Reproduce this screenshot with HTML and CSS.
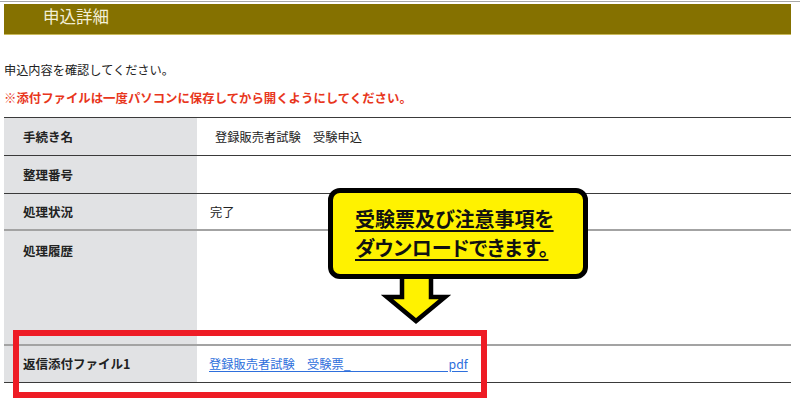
FILE: index.html
```html
<!DOCTYPE html>
<html lang="ja">
<head>
<meta charset="utf-8">
<title>申込詳細</title>
<link rel="stylesheet" href="styles.css">
</head>
<body>
<div class="topline"></div>
<div class="page">
  <h1 class="header">申込詳細</h1>
  <p class="intro">申込内容を確認してください。</p>
  <p class="warn">※添付ファイルは一度パソコンに保存してから開くようにしてください。</p>
  <div class="table">
    <div class="row r1"><div class="label">手続き名</div><div class="value lead">登録販売者試験　受験申込</div></div>
    <div class="row r2"><div class="label">整理番号</div><div class="value"></div></div>
    <div class="row r3 light"><div class="label">処理状況</div><div class="value">完了</div></div>
    <div class="row r4 light tall"><div class="label">処理履歴</div><div class="value"></div></div>
    <div class="row r5"><div class="label">返信添付ファイル1</div><div class="value"><a class="file" href="#">登録販売者試験　受験票_　　　　　　　　pdf</a></div></div>
  </div>
</div>
<div class="callout">
  <p class="callout-text"><span class="cl">受験票及び注意事項を</span><span class="cl">ダウンロードできます。</span></p>
</div>
<svg class="arrow" width="72" height="60" viewBox="380 272 72 60" aria-hidden="true">
  <polygon points="402,276 431,276 431,297 445,297 416,321 387,297 402,297" fill="#fff200" stroke="#000" stroke-width="4.5" stroke-linejoin="miter"/>
</svg>
<div class="highlight"></div>
</body>
</html>
```

FILE: styles.css
```css
html, body {
  margin: 0;
  padding: 0;
  background: #fff;
}
body {
  font-family: "Noto Sans CJK JP", "Noto Sans", sans-serif;
  font-size: 12px;
  line-height: 16px;
  color: #222;
  position: relative;
  width: 800px;
  height: 404px;
  overflow: hidden;
}
.topline {
  height: 1px;
  margin-top: 1px;
  background: #a8a8a8;
}
.page {
  padding: 2px 9px 0 4px;
}
.header {
  margin: 0;
  height: 31px;
  box-sizing: border-box;
  padding: 1px 0 0 39px;
  background: #857100;
  border-bottom: 1px solid #c9b95a;
  color: #f3efd6;
  font-size: 16.5px;
  font-weight: normal;
  line-height: 22px;
}
.intro {
  margin: 27px 0 0;
  color: #222;
  font-size: 12.2px;
}
.warn {
  margin: 12px 0 0;
  color: #e8361c;
  font-weight: bold;
  font-size: 12.4px;
}
.table {
  margin-top: 11px;
  border-top: 1px solid #3a3a3a;
}
.row {
  display: grid;
  grid-template-columns: 193px 1fr;
  box-sizing: border-box;
  border-bottom: 1px solid #3a3a3a;
}
.row.light {
  border-bottom: 2px solid #a3a3a3;
}
.r1 { height: 38px; }
.r2 { height: 38px; }
.r3 { height: 37px; }
.r4 { height: 115px; }
.r5 { height: 37px; }
.label {
  background: #e1e2e4;
  font-weight: bold;
  font-size: 12.5px;
  color: #222;
  padding-left: 19px;
  display: flex;
  align-items: center;
}
.value {
  padding-left: 13px;
  display: flex;
  align-items: center;
  color: #222;
  font-size: 12.25px;
}
.value.lead {
  padding-left: 18px;
}
.tall .label,
.tall .value {
  align-items: flex-start;
  padding-top: 12px;
}
.file {
  color: #2e6fdc;
  text-decoration: underline;
  text-underline-offset: 2px;
  margin-left: -1px;
}
.callout {
  position: absolute;
  left: 328px;
  top: 188px;
  width: 260px;
  height: 91px;
  box-sizing: border-box;
  border: 5px solid #000;
  border-radius: 12px;
  background: #fff200;
  padding: 11px 0 0 22px;
  z-index: 2;
}
.callout-text {
  margin: 0;
  font-size: 20px;
  line-height: 29px;
  font-weight: bold;
  color: #111;
  font-feature-settings: "palt";
}
.cl {
  display: block;
  height: 29px;
  width: max-content;
  text-decoration: underline;
  text-underline-offset: 3px;
}
.arrow {
  position: absolute;
  left: 380px;
  top: 272px;
  z-index: 1;
}
.highlight {
  position: absolute;
  left: 13px;
  top: 330px;
  width: 474px;
  height: 68px;
  box-sizing: border-box;
  border: 6px solid #ee1c25;
  z-index: 3;
}
```
